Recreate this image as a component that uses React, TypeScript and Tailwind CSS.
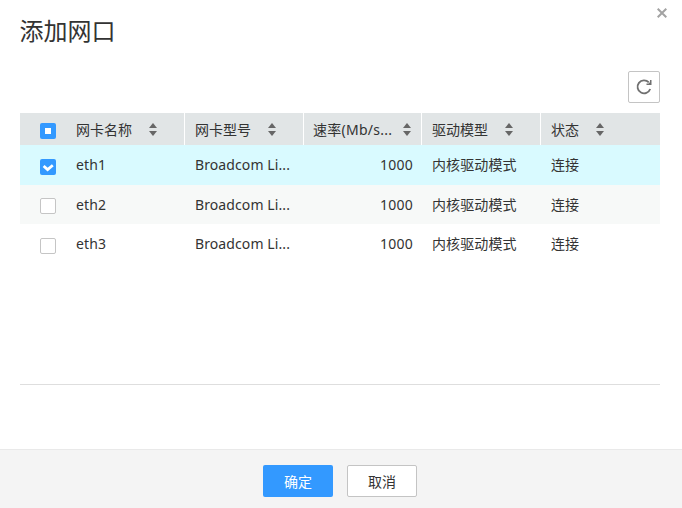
import React from "react";

const GRID = "grid grid-cols-[46px_119px_119px_118px_119px_119px]";

function SortIcon() {
  return (
    <svg className="block h-[13px] w-[8px] shrink-0" viewBox="0 0 8 13" fill="#666">
      <path d="M4 0L8 5H0z" />
      <path d="M0 8h8L4 13z" />
    </svg>
  );
}

type CheckState = "all" | "some" | "none";

function Checkbox({ state }: { state: CheckState }) {
  if (state === "none") {
    return <span className="block size-4 rounded-[2px] border border-[#c5c5c5] bg-white" />;
  }
  return (
    <span className="flex size-4 items-center justify-center rounded-[2px] bg-[#3399ff]">
      {state === "some" ? (
        <span className="size-[6px] bg-white" />
      ) : (
        <svg className="size-4" viewBox="0 0 16 16" fill="none" stroke="#fff" strokeWidth="2.8">
          <path d="M3.6 7L7.6 10.6L12.8 6.2" />
        </svg>
      )}
    </span>
  );
}

const columns = [
  { label: "网卡名称", style: "pl-[10px] gap-[17px]" },
  { label: "网卡型号", style: "pl-[10px] gap-[17px]" },
  { label: "速率(Mb/s...", style: "justify-between pl-[9px] pr-[10px] tracking-[0.25px]" },
  { label: "驱动模型", style: "pl-[10px] gap-[17px]" },
  { label: "状态", style: "pl-[10px] gap-[17px]" },
];

const rows: { name: string; state: CheckState; style: string; box: string }[] = [
  { name: "eth1", state: "all", style: "h-10 bg-[#d9faff]", box: "pt-[14px]" },
  { name: "eth2", state: "none", style: "h-[39px] bg-[#f7f9f8]", box: "pt-[13px]" },
  { name: "eth3", state: "none", style: "h-[39px] bg-white", box: "pt-[14px]" },
];

export default function App() {
  return (
    <div className="flex h-[508px] w-[682px] flex-col overflow-hidden bg-white font-['Noto_Sans','Noto_Sans_CJK_SC',sans-serif] text-[14px] text-[#333]">
      <header className="flex h-[71px] items-start justify-between pl-[19.5px] pr-[15px]">
        <h1 className="pt-[13px] text-[24px] leading-9">添加网口</h1>
        <button className="mt-[8px]" aria-label="关闭">
          <svg className="size-[10px]" viewBox="0 0 10 10" stroke="#a3a3a3" strokeWidth="2">
            <path d="M.7.7l8.6 8.6M9.3.7L.7 9.3" />
          </svg>
        </button>
      </header>

      <div className="flex h-[42px] justify-end pr-[22px]">
        <button className="flex size-8 items-center justify-center rounded-[2px] border border-[#c4c4c4] bg-white" aria-label="刷新">
          <svg className="size-4" viewBox="0 0 16 16" fill="none" stroke="#707070" strokeWidth="1.8">
            <path d="M14.2 10A6.5 6.5 0 1 1 12.8 3.4" />
            <path d="M15.5 1v5H10.5V4.4h2.2L14 3V1z" fill="#707070" stroke="none" />
          </svg>
        </button>
      </div>

      <main className="ml-5 h-[272px] w-[640px] border-b border-[#dedede]">
        <div className={`${GRID} h-8 bg-[#e1e5e6]`}>
          <div className="pl-5 pt-[10px]">
            <Checkbox state="some" />
          </div>
          {columns.map((c, i) => (
            <div
              key={c.label}
              className={`flex items-center whitespace-nowrap ${c.style} ${i < 4 ? "border-r border-white" : ""}`}
            >
              <span className="relative top-px leading-5">{c.label}</span>
              <SortIcon />
            </div>
          ))}
        </div>
        {rows.map((r) => (
          <div key={r.name} className={`${GRID} ${r.style} whitespace-nowrap leading-[39px]`}>
            <div className={`pl-5 ${r.box}`}>
              <Checkbox state={r.state} />
            </div>
            <div className="pl-[10px] tracking-[0.15px]">{r.name}</div>
            <div className="pl-[10px] tracking-[0.1px]">Broadcom Li...</div>
            <div className="pr-[9px] text-right tracking-[0.25px]">1000</div>
            <div className="pl-[10px] tracking-[0.1px]">内核驱动模式</div>
            <div className="pl-[10px]">连接</div>
          </div>
        ))}
      </main>

      <footer className="mt-auto flex h-[59px] justify-center gap-[14px] border-t border-[#e9e9e9] bg-[#f4f4f4] pr-[2px] pt-[15px]">
        <button className="h-8 w-[70px] rounded-[2px] bg-[#3399ff] text-white">确定</button>
        <button className="h-8 w-[70px] rounded-[2px] border border-[#c4c4c4] bg-white">取消</button>
      </footer>
    </div>
  );
}
